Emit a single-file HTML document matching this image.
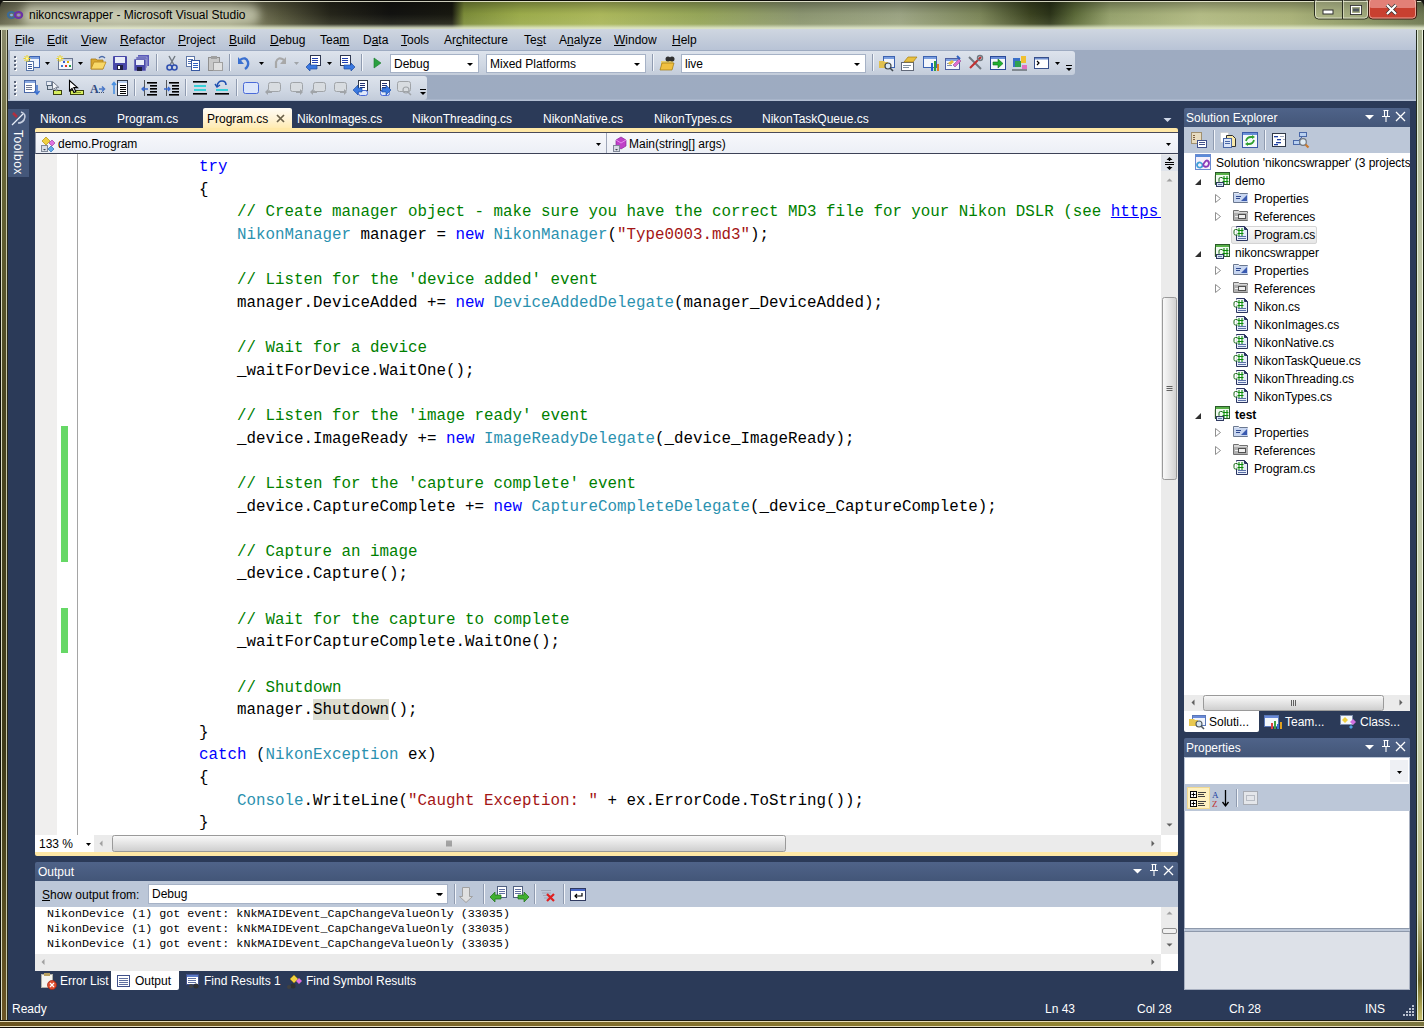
<!DOCTYPE html>
<html><head><meta charset="utf-8">
<style>
*{margin:0;padding:0;box-sizing:border-box}
html,body{width:1424px;height:1028px;overflow:hidden}
body{position:relative;font-family:"Liberation Sans",sans-serif;font-size:12px;color:#000;background:#141410}
.a{position:absolute}
.t{position:absolute;white-space:nowrap;line-height:14px}
/* frame */
#title{left:0;top:0;width:1424px;height:30px;border-radius:7px 7px 0 0;
 background:
  linear-gradient(180deg,#0c0c08 0,#0c0c08 1px,rgba(235,235,215,.85) 1px,rgba(235,235,215,.85) 2px,rgba(0,0,0,.28) 2px,rgba(0,0,0,.1) 9px,rgba(0,0,0,0) 14px,rgba(210,220,170,.12) 24px,rgba(225,232,205,.9) 28px,rgba(225,232,205,.9) 29px),
  linear-gradient(90deg,#5e5e48 0,#8a8a70 30px,#9c9c84 120px,#8a8a6c 230px,#55553c 280px,#25251a 330px,#121210 390px,#181810 452px,#7a8a38 464px,#9aaa4a 520px,#aab65a 600px,#94a458 700px,#8a9470 800px,#9aa282 900px,#7a8458 980px,#3a4220 1030px,#2a3218 1050px,#5a6838 1075px,#94a06c 1110px,#b2ba84 1200px,#a8b078 1290px,#8a9464 1360px,#6a7450 1424px);}
#lframe{left:0;top:30px;width:8px;height:998px;background:linear-gradient(90deg,#101008 0,#101008 1px,#dcdcc4 1px,#dcdcc4 2px,transparent 2px,transparent 6px,#c8c8a8 6px,#c8c8a8 7px,#2a2a1c 7px),linear-gradient(180deg,#8a8a6c 0,#6a6838 120px,#4a4620 370px,#3e3a18 720px,#544c20 870px,#6a5424 990px)}
#rframe{left:1416px;top:30px;width:8px;height:998px;background:linear-gradient(90deg,#222a1c 0,#222a1c 1px,#e0ecd8 1px,#e0ecd8 2px,transparent 2px,transparent 6px,#eef4e2 6px,#eef4e2 7px,#101408 7px),linear-gradient(180deg,#a8b090 0,#c4ccaa 300px,#c4ccaa 700px,#b8b880 880px,#6a6428 950px,#a8a050 975px,#c8c070 990px)}
#bframe{left:0;top:1020px;width:1424px;height:8px;background:linear-gradient(180deg,#181810 0,#181810 1px,#e6dcb8 1px,#e6dcb8 2px,transparent 2px,transparent 6px,#eae0c0 6px,#eae0c0 7px,#100c08 7px),linear-gradient(90deg,#6a5420 0,#7a6428 400px,#8a7a30 900px,#988c34 1200px,#7a7440 1424px)}
/* client */
#client{left:8px;top:29px;width:1408px;height:991px;background:#2b3a58;overflow:hidden;border-top:1px solid #1e2418}
#menubar{background:linear-gradient(180deg,#cfd6e1 0,#c4cddb 10px,#b8c3d6 21px,#9eabc1 21px,#9dabc1 70px,#b2bed2 71px,#b2bed2 72px)}
.menu{top:4px;font-size:12px;color:#000}
.menu u{text-decoration:underline}
.tb{background:linear-gradient(180deg,#dde3ec 0,#cfd7e3 60%,#c3ccda 100%);border-radius:0 3px 3px 0}
.combo{background:#fff;border:1px solid #a6b2c6}
.combo span{position:absolute;left:3px;top:2px;white-space:nowrap;line-height:14px}
.combo i{position:absolute;right:5px;top:8px;width:0;height:0;border-left:3px solid transparent;border-right:3px solid transparent;border-top:3px solid #000}
.tab{color:#fff}
#code{left:85px;top:156.2px;font-family:"Liberation Mono",monospace;font-size:15.833px;line-height:22.62px;color:#000;width:1076px;height:679px;overflow:hidden;white-space:pre}
.kw{color:#0000ff}.cm{color:#008000}.ty{color:#2b91af}.st{color:#a31515}.ln{color:#0000ff;text-decoration:underline}.hl{background:#deded2;padding:2px 0 1px}
#outtxt{left:12px;top:0px;font-family:"Liberation Mono",monospace;font-size:11.7px;line-height:15px;white-space:pre;color:#000}
</style></head><body>
<div id="title" class="a"></div>
<div id="lframe" class="a"></div>
<div id="rframe" class="a"></div>
<div id="bframe" class="a"></div>
<div id="client" class="a"></div>
<div class="a" style="left:22px;top:5px;width:238px;height:20px;border-radius:10px;background:rgba(235,238,215,.55);filter:blur(4px)"></div>
<div class="t" style="left:29px;top:8px;font-size:12px;color:#000">nikoncswrapper - Microsoft Visual Studio</div>
<div id="menubar" class="a" style="left:8px;top:29px;width:1408px;height:72px"></div>
<div class="t" style="left:15px;top:33px"><u>F</u>ile</div>
<div class="t" style="left:47px;top:33px"><u>E</u>dit</div>
<div class="t" style="left:81px;top:33px"><u>V</u>iew</div>
<div class="t" style="left:120px;top:33px"><u>R</u>efactor</div>
<div class="t" style="left:178px;top:33px"><u>P</u>roject</div>
<div class="t" style="left:229px;top:33px"><u>B</u>uild</div>
<div class="t" style="left:270px;top:33px"><u>D</u>ebug</div>
<div class="t" style="left:320px;top:33px">Tea<u>m</u></div>
<div class="t" style="left:363px;top:33px">D<u>a</u>ta</div>
<div class="t" style="left:401px;top:33px"><u>T</u>ools</div>
<div class="t" style="left:444px;top:33px">Ar<u>c</u>hitecture</div>
<div class="t" style="left:524px;top:33px">Te<u>s</u>t</div>
<div class="t" style="left:559px;top:33px">A<u>n</u>alyze</div>
<div class="t" style="left:614px;top:33px"><u>W</u>indow</div>
<div class="t" style="left:672px;top:33px"><u>H</u>elp</div>
<!-- toolbars -->
<div class="a tb" style="left:10px;top:51px;width:1065px;height:24px"></div>
<div class="a tb" style="left:10px;top:76px;width:417px;height:24px"></div>
<!-- combos -->
<div class="a combo" style="left:390px;top:54px;width:89px;height:19px"><span>Debug</span><i></i></div>
<div class="a combo" style="left:486px;top:54px;width:160px;height:19px"><span>Mixed Platforms</span><i></i></div>
<div class="a combo" style="left:681px;top:54px;width:185px;height:19px"><span>live</span><i></i></div>

<!-- toolbox strip -->
<div class="a" style="left:8px;top:109px;width:21px;height:68px;background:#44577a"></div>
<div class="t" style="left:11px;top:120px;color:#fff;transform-origin:0 0;transform:translate(14px,10px) rotate(90deg);font-size:12px;letter-spacing:0.5px">Toolbox</div>

<!-- tabs -->
<div class="t tab" style="left:40px;top:112px">Nikon.cs</div>
<div class="t tab" style="left:117px;top:112px">Program.cs</div>
<div class="a" style="left:203px;top:108px;width:89px;height:22px;border-radius:2px 2px 0 0;background:linear-gradient(180deg,#fffcf4 0,#fff3d6 50%,#ffe9a8 100%)"></div>
<div class="t" style="left:207px;top:112px;color:#000">Program.cs</div>
<div class="t tab" style="left:297px;top:112px">NikonImages.cs</div>
<div class="t tab" style="left:412px;top:112px">NikonThreading.cs</div>
<div class="t tab" style="left:543px;top:112px">NikonNative.cs</div>
<div class="t tab" style="left:654px;top:112px">NikonTypes.cs</div>
<div class="t tab" style="left:762px;top:112px">NikonTaskQueue.cs</div>
<!-- yellow band -->
<div class="a" style="left:35px;top:128px;width:1143px;height:5px;background:#ffe8a6;border-radius:2px 2px 0 0"></div>
<!-- nav bar -->
<div class="a" style="left:35px;top:132px;width:1143px;height:22px;background:linear-gradient(180deg,#f7f8fb,#eceff6);border-top:1px solid #4a4a58;border-bottom:1px solid #3c4256;border-left:1px solid #9098a8"></div>
<div class="a" style="left:606px;top:133px;width:1px;height:20px;background:#9ea6b8"></div>
<div class="t" style="left:58px;top:137px">demo.Program</div>
<div class="t" style="left:629px;top:137px">Main(string[] args)</div>

<!-- editor -->
<div id="editor" class="a" style="left:35px;top:154px;width:1126px;height:681px;background:#fff;overflow:hidden">
 <div class="a" style="left:0;top:0;width:22px;height:681px;background:#f0efee"></div>
 <div class="a" style="left:42px;top:0;width:1px;height:681px;background:#a5a5a5"></div>
</div>
<pre id="code" class="a">            <span class="kw">try</span>
            {
                <span class="cm">// Create manager object - make sure you have the correct MD3 file for your Nikon DSLR (see </span><span class="ln">https:</span>
                <span class="ty">NikonManager</span> manager = <span class="kw">new</span> <span class="ty">NikonManager</span>(<span class="st">"Type0003.md3"</span>);

                <span class="cm">// Listen for the 'device added' event</span>
                manager.DeviceAdded += <span class="kw">new</span> <span class="ty">DeviceAddedDelegate</span>(manager_DeviceAdded);

                <span class="cm">// Wait for a device</span>
                _waitForDevice.WaitOne();

                <span class="cm">// Listen for the 'image ready' event</span>
                _device.ImageReady += <span class="kw">new</span> <span class="ty">ImageReadyDelegate</span>(_device_ImageReady);

                <span class="cm">// Listen for the 'capture complete' event</span>
                _device.CaptureComplete += <span class="kw">new</span> <span class="ty">CaptureCompleteDelegate</span>(_device_CaptureComplete);

                <span class="cm">// Capture an image</span>
                _device.Capture();

                <span class="cm">// Wait for the capture to complete</span>
                _waitForCaptureComplete.WaitOne();

                <span class="cm">// Shutdown</span>
                manager.<span class="hl">Shutdown</span>();
            }
            <span class="kw">catch</span> (<span class="ty">NikonException</span> ex)
            {
                <span class="ty">Console</span>.WriteLine(<span class="st">"Caught Exception: "</span> + ex.ErrorCode.ToString());
            }
</pre>
<div class="a" style="left:61px;top:426px;width:7px;height:136px;background:#66d866"></div>
<div class="a" style="left:61px;top:608px;width:7px;height:45px;background:#66d866"></div>
<!-- editor vscroll -->
<div class="a" style="left:1161px;top:154px;width:17px;height:681px;background:#ebebeb"></div>
<!-- editor hscroll row -->
<div class="a" style="left:35px;top:835px;width:1143px;height:17px;background:#ebebeb"></div>
<div class="a" style="left:35px;top:835px;width:59px;height:17px;background:#fff"></div>
<div class="t" style="left:39px;top:837px">133 %</div>
<div class="a" style="left:1161px;top:835px;width:17px;height:17px;background:#fff"></div>
<div class="a" style="left:35px;top:852px;width:1143px;height:4px;background:#ffe8a6;border-radius:0 0 2px 2px"></div>

<!-- output -->
<div class="a" style="left:35px;top:862px;width:1143px;height:19px;background:linear-gradient(180deg,#4f6389,#435678);border-radius:2px 2px 0 0"></div>
<div class="t" style="left:38px;top:865px;color:#fff">Output</div>
<div class="a" style="left:35px;top:881px;width:1143px;height:26px;background:#bcc7d8"></div>
<div class="t" style="left:42px;top:888px"><u>S</u>how output from:</div>
<div class="a combo" style="left:148px;top:884px;width:300px;height:20px"><span>Debug</span><i></i></div>
<div class="a" style="left:35px;top:907px;width:1143px;height:47px;background:#fff"></div>
<div class="a" style="left:35px;top:954px;width:1143px;height:17px;background:#ebebeb"></div>
<div class="a" style="left:1161px;top:907px;width:17px;height:47px;background:#ebebeb"></div>
<div class="a" style="left:1161px;top:954px;width:17px;height:17px;background:#fff"></div>

<div class="a" style="left:35px;top:907px;width:1126px;height:47px;overflow:hidden"><pre id="outtxt" class="a">NikonDevice (1) got event: kNkMAIDEvent_CapChangeValueOnly (33035)
NikonDevice (1) got event: kNkMAIDEvent_CapChangeValueOnly (33035)
NikonDevice (1) got event: kNkMAIDEvent_CapChangeValueOnly (33035)
NikonDevice (1) got event: kNkMAIDEvent_CapChangeValueOnly (33035)</pre>
</div>
<!-- bottom tabs -->
<div class="a" style="left:111px;top:971px;width:68px;height:19px;background:#fff;border-radius:0 0 2px 2px"></div>
<div class="t" style="left:60px;top:974px;color:#fff">Error List</div>
<div class="t" style="left:135px;top:974px">Output</div>
<div class="t" style="left:204px;top:974px;color:#fff">Find Results 1</div>
<div class="t" style="left:306px;top:974px;color:#fff">Find Symbol Results</div>

<!-- status -->
<div class="t" style="left:12px;top:1002px;color:#fff">Ready</div>
<div class="t" style="left:1045px;top:1002px;color:#fff">Ln 43</div>
<div class="t" style="left:1137px;top:1002px;color:#fff">Col 28</div>
<div class="t" style="left:1229px;top:1002px;color:#fff">Ch 28</div>
<div class="t" style="left:1365px;top:1002px;color:#fff">INS</div>

<!-- solution explorer -->
<div class="a" style="left:1184px;top:108px;width:226px;height:19px;background:linear-gradient(180deg,#4f6389,#435678);border-radius:2px 2px 0 0"></div>
<div class="t" style="left:1186px;top:111px;color:#fff">Solution Explorer</div>
<div class="a" style="left:1184px;top:127px;width:226px;height:26px;background:#bcc7d8"></div>
<div class="a" style="left:1184px;top:153px;width:226px;height:542px;background:#fff"></div>
<div class="a" style="left:1184px;top:695px;width:226px;height:16px;background:#ebebeb"></div>
<div class="a" style="left:1231px;top:226px;width:86px;height:18px;border:1px solid #d4d4d4;border-radius:2px;background:linear-gradient(180deg,#fafafa,#e6e6e6)"></div>
<div id="se" class="a" style="left:1184px;top:153px;width:226px;height:542px;overflow:hidden">
<div class="t" style="left:32px;top:3px;">Solution 'nikoncswrapper' (3 projects)</div>
<div class="t" style="left:51px;top:21px;">demo</div>
<div class="t" style="left:70px;top:39px;">Properties</div>
<div class="t" style="left:70px;top:57px;">References</div>
<div class="t" style="left:70px;top:75px;">Program.cs</div>
<div class="t" style="left:51px;top:93px;">nikoncswrapper</div>
<div class="t" style="left:70px;top:111px;">Properties</div>
<div class="t" style="left:70px;top:129px;">References</div>
<div class="t" style="left:70px;top:147px;">Nikon.cs</div>
<div class="t" style="left:70px;top:165px;">NikonImages.cs</div>
<div class="t" style="left:70px;top:183px;">NikonNative.cs</div>
<div class="t" style="left:70px;top:201px;">NikonTaskQueue.cs</div>
<div class="t" style="left:70px;top:219px;">NikonThreading.cs</div>
<div class="t" style="left:70px;top:237px;">NikonTypes.cs</div>
<div class="t" style="left:51px;top:255px;font-weight:bold;">test</div>
<div class="t" style="left:70px;top:273px;">Properties</div>
<div class="t" style="left:70px;top:291px;">References</div>
<div class="t" style="left:70px;top:309px;">Program.cs</div>
</div>
<!-- SE bottom tabs -->
<div class="a" style="left:1184px;top:711px;width:75px;height:21px;background:#fff;border-radius:0 0 2px 2px"></div>
<div class="t" style="left:1209px;top:715px">Soluti...</div>
<div class="t" style="left:1285px;top:715px;color:#fff">Team...</div>
<div class="t" style="left:1360px;top:715px;color:#fff">Class...</div>

<!-- properties -->
<div class="a" style="left:1184px;top:738px;width:226px;height:19px;background:linear-gradient(180deg,#4f6389,#435678);border-radius:2px 2px 0 0"></div>
<div class="t" style="left:1186px;top:741px;color:#fff">Properties</div>
<div class="a" style="left:1184px;top:757px;width:226px;height:28px;background:#bcc7d8"></div>
<div class="a" style="left:1185px;top:758px;width:224px;height:26px;background:#fff"></div>
<div class="a" style="left:1184px;top:785px;width:226px;height:26px;background:#bcc7d8"></div>
<div class="a" style="left:1184px;top:811px;width:226px;height:117px;background:#fff;border-left:1px solid #a8b0c0;border-right:1px solid #a8b0c0"></div>
<div class="a" style="left:1184px;top:928px;width:226px;height:4px;background:#bcc7d8;border-top:1px solid #8e99ab;border-bottom:1px solid #8e99ab"></div>
<div class="a" style="left:1184px;top:932px;width:226px;height:58px;background:#dde1e8;border:1px solid #a8b0c0;border-top:none"></div>
<!--ICONS-->
<svg class="a" style="left:0;top:0" width="1424" height="1028" viewBox="0 0 1424 1028" shape-rendering="auto">
<rect x="15" y="57" width="2" height="2" fill="#fff"/>
<rect x="14" y="56" width="2" height="2" fill="#5a6478"/>
<rect x="15" y="61" width="2" height="2" fill="#fff"/>
<rect x="14" y="60" width="2" height="2" fill="#5a6478"/>
<rect x="15" y="65" width="2" height="2" fill="#fff"/>
<rect x="14" y="64" width="2" height="2" fill="#5a6478"/>
<rect x="15" y="69" width="2" height="2" fill="#fff"/>
<rect x="14" y="68" width="2" height="2" fill="#5a6478"/>
<rect x="29.5" y="56.5" width="10" height="11" fill="#eef3fb" stroke="#3d63b0"/>
<rect x="30" y="57" width="9" height="2" fill="#7a9ee0"/>
<rect x="26.5" y="61.5" width="7" height="9" fill="#fff" stroke="#5b78a8"/>
<rect x="28" y="64" width="4" height="1" fill="#3c5a98"/>
<rect x="28" y="66" width="4" height="1" fill="#3c5a98"/>
<rect x="28" y="68" width="4" height="1" fill="#3c5a98"/>
<path d="M27 55v7M23.5 58.5h7M24.5 56l5 5M29.5 56l-5 5" stroke="#f0d000" stroke-width=".9"/>
<circle cx="27" cy="58.5" r="1.2" fill="#fff8a0"/>
<path d="M45 62h5l-2.5 3z" fill="#000"/>
<rect x="58.5" y="58.5" width="14" height="11" fill="#f4f7fb" stroke="#6a7690"/>
<rect x="59" y="59" width="13" height="2" fill="#c8d2e4"/>
<rect x="63" y="61" width="2" height="2" fill="#3a5fc8"/>
<rect x="67" y="61" width="2" height="2" fill="#d8b000"/>
<rect x="61" y="65" width="2" height="2" fill="#3a78d0"/>
<rect x="65" y="65" width="2" height="2" fill="#e03020"/>
<rect x="69" y="65" width="2" height="2" fill="#20a040"/>
<path d="M60 55v7M56.5 58.5h7M57.5 56l5 5M62.5 56l-5 5" stroke="#f0d000" stroke-width=".9"/>
<circle cx="60" cy="58.5" r="1.2" fill="#fff8a0"/>
<path d="M78 62h5l-2.5 3z" fill="#000"/>
<path d="M91 59h5l1 1h6v9h-12z" fill="#d9a830" stroke="#a87818" stroke-width=".8"/>
<path d="M91 69l3-7h12l-3 7z" fill="#f8d868" stroke="#b88820" stroke-width=".8"/>
<path d="M99 58q3-3 6 0" fill="none" stroke="#4a6aa8" stroke-width="1.3"/>
<rect x="113" y="56" width="14" height="14" rx="1" fill="#4848a8"/>
<rect x="115" y="57" width="10" height="6" fill="#e8ecf8"/>
<rect x="117" y="65" width="6" height="5" fill="#202040"/>
<rect x="118" y="66" width="2" height="3" fill="#fff"/>
<rect x="138" y="55" width="11" height="11" fill="#5a5ab8"/>
<rect x="136" y="57" width="11" height="11" fill="#5050b0" stroke="#c8cce8" stroke-width=".6"/>
<rect x="134" y="59" width="12" height="12" fill="#4848a8" stroke="#c8cce8" stroke-width=".6"/>
<rect x="136" y="60" width="8" height="5" fill="#e8ecf8"/>
<rect x="137" y="67" width="5" height="4" fill="#202040"/>
<rect x="156" y="54" width="1" height="17" fill="#8f9bb0"/>
<rect x="157" y="54" width="1" height="17" fill="#f2f5fa"/>
<path d="M169 56l5 9M175 56l-5 9" stroke="#707880" stroke-width="1.4"/>
<circle cx="169.5" cy="67.5" r="2.5" fill="none" stroke="#3050b0" stroke-width="1.6"/>
<circle cx="174.5" cy="67.5" r="2.5" fill="none" stroke="#3050b0" stroke-width="1.6"/>
<rect x="186.5" y="56.5" width="8" height="10" fill="#fff" stroke="#6078a8"/>
<rect x="188" y="59" width="5" height="1" fill="#5070b0"/>
<rect x="188" y="61" width="5" height="1" fill="#5070b0"/>
<rect x="188" y="63" width="5" height="1" fill="#5070b0"/>
<rect x="191.5" y="60.5" width="8" height="10" fill="#fff" stroke="#3858a0"/>
<rect x="193" y="63" width="5" height="1" fill="#3060c0"/>
<rect x="193" y="65" width="5" height="1" fill="#3060c0"/>
<rect x="193" y="67" width="5" height="1" fill="#3060c0"/>
<rect x="208.5" y="57.5" width="11" height="13" fill="#c8c8c8" stroke="#909090"/>
<rect x="211" y="56" width="6" height="3" fill="#a0a0a0"/>
<rect x="213.5" y="62.5" width="9" height="8" fill="#e0e0e0" stroke="#a0a0a0"/>
<rect x="229" y="54" width="1" height="17" fill="#8f9bb0"/>
<rect x="230" y="54" width="1" height="17" fill="#f2f5fa"/>
<path d="M240 60q6-4 8 2q1 4-3 7" fill="none" stroke="#3a70d0" stroke-width="2.4"/>
<path d="M238 57v7h6z" fill="#3a70d0"/>
<path d="M259 62h5l-2.5 3z" fill="#000"/>
<path d="M284 60q-6-4-8 2v6" fill="none" stroke="#a8a8a8" stroke-width="2.2"/>
<path d="M286 57v7h-6z" fill="#a8a8a8"/>
<path d="M294 62h5l-2.5 3z" fill="#a0a4a8"/>
<rect x="310.5" y="55.5" width="10" height="10" fill="#fff" stroke="#303850"/>
<rect x="312" y="58" width="6" height="1" fill="#2040b0"/>
<rect x="312" y="60" width="6" height="1" fill="#2040b0"/>
<rect x="312" y="62" width="6" height="1" fill="#2040b0"/>
<path d="M306 67l4-4v2h7v4h-7v2z" fill="#3a78e0" stroke="#1e4aa0" stroke-width=".7"/>
<path d="M327 62h5l-2.5 3z" fill="#000"/>
<rect x="340.5" y="55.5" width="10" height="10" fill="#fff" stroke="#303850"/>
<rect x="342" y="58" width="6" height="1" fill="#2040b0"/>
<rect x="342" y="60" width="6" height="1" fill="#2040b0"/>
<rect x="342" y="62" width="6" height="1" fill="#2040b0"/>
<path d="M355 67l-4-4v2h-7v4h7v2z" fill="#3a78e0" stroke="#1e4aa0" stroke-width=".7"/>
<rect x="361" y="54" width="1" height="17" fill="#8f9bb0"/>
<rect x="362" y="54" width="1" height="17" fill="#f2f5fa"/>
<path d="M374 58l7 5-7 5z" fill="#2aa040" stroke="#1a7a2a" stroke-width=".6"/>
<rect x="652" y="54" width="1" height="17" fill="#8f9bb0"/>
<rect x="653" y="54" width="1" height="17" fill="#f2f5fa"/>
<path d="M661 61h6l2-2h4v10h-12z" fill="#e8d070"/>
<path d="M660 70l2-7h12l-2 7z" fill="#f0c040" stroke="#a07810" stroke-width=".7"/>
<circle cx="668" cy="59" r="2.5" fill="#303030"/><circle cx="672" cy="59" r="2.5" fill="#303030"/>
<rect x="872" y="54" width="1" height="17" fill="#8f9bb0"/>
<rect x="873" y="54" width="1" height="17" fill="#f2f5fa"/>
<rect x="883.5" y="56.5" width="11" height="11" fill="#f0f4fb" stroke="#3d63b0"/>
<rect x="884" y="57" width="10" height="2" fill="#7a9ee0"/>
<path d="M879 61h5l1 1h3v6h-9z" fill="#e0c050"/>
<circle cx="888" cy="66" r="3" fill="#d8e8f8" stroke="#404850" stroke-width="1.2"/>
<path d="M890 68l3 3" stroke="#404850" stroke-width="1.6"/>
<rect x="901.5" y="62.5" width="12" height="8" fill="#fff" stroke="#606878"/>
<rect x="903" y="65" width="8" height="1" fill="#8090a0"/><rect x="903" y="67" width="6" height="1" fill="#8090a0"/>
<path d="M904 62l4-5h9l-4 5z" fill="#e8c040" stroke="#a88010" stroke-width=".7"/>
<rect x="923.5" y="56.5" width="13" height="11" fill="#f4f7fb" stroke="#3d63b0"/>
<rect x="924" y="57" width="12" height="2" fill="#7a9ee0"/>
<rect x="931" y="63" width="2" height="8" fill="#2060d0"/><rect x="934" y="61" width="2" height="10" fill="#30a040"/><rect x="937" y="64" width="2" height="7" fill="#e08020"/>
<rect x="945.5" y="58.5" width="14" height="11" fill="#f4f7fb" stroke="#5060a0"/>
<rect x="946" y="59" width="13" height="2" fill="#7a9ee0"/>
<rect x="947" y="63" width="5" height="1" fill="#8090b0"/><rect x="947" y="65" width="5" height="1" fill="#8090b0"/>
<path d="M948 63l4-3 2 2-4 3z" fill="#e8c040"/>
<path d="M953 65l6-6 2 2-6 6z" fill="#e070d0" stroke="#905090" stroke-width=".6"/>
<path d="M957 56l3 3" stroke="#3060c0" stroke-width="2"/>
<path d="M969 57l12 12" stroke="#707880" stroke-width="2"/>
<path d="M981 57l-11 11" stroke="#c03030" stroke-width="2.2"/>
<circle cx="980" cy="58" r="2.5" fill="none" stroke="#707880" stroke-width="1.4"/>
<rect x="990.5" y="56.5" width="15" height="13" fill="#f4f7fb" stroke="#2a4a98"/>
<rect x="991" y="57" width="14" height="2" fill="#6a8ed8"/>
<path d="M993 62h5v-3l5 4.5-5 4.5v-3h-5z" fill="#20b030" stroke="#107020" stroke-width=".6"/>
<rect x="1013" y="58" width="7" height="9" fill="#3a70c8"/><rect x="1015" y="61" width="6" height="6" fill="#30a050"/>
<rect x="1021" y="56" width="5" height="7" fill="#f0c030"/><rect x="1022" y="65" width="5" height="5" fill="#e070c0"/>
<rect x="1012" y="69" width="15" height="2" fill="#808890"/>
<rect x="1034.5" y="57.5" width="14" height="11" fill="#fff" stroke="#38508a"/>
<rect x="1035" y="58" width="13" height="1.5" fill="#7090d0"/>
<path d="M1037 61l2 2-2 2" fill="none" stroke="#000" stroke-width="1.2"/>
<path d="M1055 62h5l-2.5 3z" fill="#000"/>
<rect x="1066" y="65" width="6" height="1" fill="#000"/>
<path d="M1066 68h6l-3 3z" fill="#000"/>
<rect x="15" y="82" width="2" height="2" fill="#fff"/>
<rect x="14" y="81" width="2" height="2" fill="#5a6478"/>
<rect x="15" y="86" width="2" height="2" fill="#fff"/>
<rect x="14" y="85" width="2" height="2" fill="#5a6478"/>
<rect x="15" y="90" width="2" height="2" fill="#fff"/>
<rect x="14" y="89" width="2" height="2" fill="#5a6478"/>
<rect x="15" y="94" width="2" height="2" fill="#fff"/>
<rect x="14" y="93" width="2" height="2" fill="#5a6478"/>
<rect x="24.5" y="80.5" width="11" height="12" fill="#fff" stroke="#4a68a8"/>
<rect x="25" y="81" width="10" height="2" fill="#88a8e0"/>
<rect x="26" y="85" width="6" height="1" fill="#707890"/>
<rect x="26" y="87" width="6" height="1" fill="#707890"/>
<rect x="26" y="89" width="6" height="1" fill="#707890"/>
<path d="M37 85v8M34.5 91l2.5 3 2.5-3" fill="none" stroke="#3a70d0" stroke-width="1.5"/>
<rect x="46.5" y="81.5" width="5" height="4" fill="#e8ecf4" stroke="#8090a8"/>
<rect x="47.5" y="85.5" width="5" height="4" fill="#d0d8e4" stroke="#506070"/>
<rect x="53.5" y="90.5" width="8" height="4" fill="#d8f060" stroke="#3a4010"/>
<path d="M52.5 81.5v8.5l2-2 1.5 3 1.3-.7-1.5-3h3z" fill="#f4f6fa" stroke="#707888" stroke-width="1"/>
<rect x="70.5" y="90.5" width="13" height="4" fill="#d8f060" stroke="#3a4010"/>
<rect x="73" y="92" width="8" height="1" fill="#8a9a30"/>
<path d="M69.5 80.5v10.5l2.5-2.5 2 4 1.8-.9-2-4h3.7z" fill="#fff" stroke="#000" stroke-width="1.1"/>
<text x="90" y="93" font-family="Liberation Serif" font-weight="bold" font-size="12" fill="#304a80">A</text>
<path d="M99 89h5M102 86.5l2.5 2.5-2.5 2.5" fill="none" stroke="#4a78c8" stroke-width="1.5"/>
<rect x="99" y="92" width="1" height="1" fill="#405070"/><rect x="101" y="92" width="1" height="1" fill="#405070"/><rect x="103" y="92" width="1" height="1" fill="#405070"/>
<rect x="117.5" y="80.5" width="10" height="15" fill="#fff" stroke="#303848"/>
<rect x="118" y="81" width="9" height="2" fill="#b8d0f0"/>
<rect x="120" y="85" width="6" height="1" fill="#000"/>
<rect x="120" y="87" width="6" height="1" fill="#000"/>
<rect x="120" y="89" width="6" height="1" fill="#000"/>
<rect x="120" y="91" width="6" height="1" fill="#000"/>
<rect x="120" y="93" width="6" height="1" fill="#000"/>
<path d="M114 94v-11M112 85l2-2.5 2 2.5" fill="none" stroke="#4a90e0" stroke-width="1.6"/>
<rect x="134" y="79" width="1" height="17" fill="#8f9bb0"/>
<rect x="135" y="79" width="1" height="17" fill="#f2f5fa"/>
<rect x="147" y="82" width="10" height="1.6" fill="#000"/>
<rect x="150" y="85" width="7" height="1.6" fill="#000"/>
<rect x="150" y="88" width="7" height="1.6" fill="#000"/>
<rect x="150" y="91" width="7" height="1.6" fill="#000"/>
<rect x="147" y="94" width="10" height="1.6" fill="#000"/>
<rect x="144" y="80" width="1" height="16" fill="#000" opacity=".6"/>
<path d="M148 89h-6M144 87l-2 2 2 2" fill="none" stroke="#3a6ad0" stroke-width="1.3"/>
<rect x="169" y="82" width="10" height="1.6" fill="#000"/>
<rect x="172" y="85" width="7" height="1.6" fill="#000"/>
<rect x="172" y="88" width="7" height="1.6" fill="#000"/>
<rect x="172" y="91" width="7" height="1.6" fill="#000"/>
<rect x="169" y="94" width="10" height="1.6" fill="#000"/>
<rect x="166" y="80" width="1" height="16" fill="#000" opacity=".6"/>
<path d="M164 89h6M168 87l2 2-2 2" fill="none" stroke="#3a6ad0" stroke-width="1.3"/>
<rect x="185" y="79" width="1" height="17" fill="#8f9bb0"/>
<rect x="186" y="79" width="1" height="17" fill="#f2f5fa"/>
<rect x="193" y="81" width="14" height="1.6" fill="#000"/>
<rect x="194" y="85" width="12" height="2" fill="#38d0d8"/>
<rect x="194" y="89" width="12" height="2" fill="#38d0d8"/>
<rect x="193" y="93" width="14" height="1.6" fill="#000"/>
<path d="M217 86q1-5 5-5q4 0 4 4" fill="none" stroke="#2050b0" stroke-width="1.6"/>
<path d="M215 84l2 3 3-2" fill="none" stroke="#2050b0" stroke-width="1.4"/>
<rect x="216" y="89" width="12" height="2" fill="#38d0d8"/>
<rect x="215" y="93" width="14" height="1.6" fill="#000"/>
<rect x="236" y="79" width="1" height="17" fill="#8f9bb0"/>
<rect x="237" y="79" width="1" height="17" fill="#f2f5fa"/>
<rect x="243.5" y="82.5" width="15" height="11" rx="2" fill="#dce6fa" stroke="#4a6ad8"/>
<rect x="268.5" y="82.5" width="12" height="9" rx="2" fill="#d8dce0" stroke="#a0a4a8"/>
<path d="M265 92l3-3v2h4v2h-4v2z" fill="#a0a4a8"/>
<rect x="290.5" y="82.5" width="12" height="9" rx="2" fill="#d8dce0" stroke="#a0a4a8"/>
<path d="M303 92l-3-3v2h-4v2h4v2z" fill="#a0a4a8"/>
<rect x="313.5" y="82.5" width="12" height="9" rx="2" fill="#d8dce0" stroke="#a0a4a8"/>
<path d="M310 92l3-3v2h4v2h-4v2z" fill="#a0a4a8"/>
<rect x="334.5" y="82.5" width="12" height="9" rx="2" fill="#d8dce0" stroke="#a0a4a8"/>
<path d="M347 92l-3-3v2h-4v2h4v2z" fill="#a0a4a8"/>
<rect x="358.5" y="80.5" width="9" height="10" fill="#fff" stroke="#303848"/>
<rect x="360" y="83" width="5" height="1" fill="#203070"/>
<rect x="360" y="85" width="5" height="1" fill="#203070"/>
<rect x="360" y="87" width="5" height="1" fill="#203070"/>
<rect x="358.5" y="90.5" width="9" height="5" rx="2" fill="#e0e8fa" stroke="#4a6ad8"/>
<path d="M353 90l5-5v3h4v4h-4v3z" fill="#3a78e0" stroke="#1a4aa0" stroke-width=".6"/>
<rect x="380.5" y="80.5" width="9" height="10" fill="#fff" stroke="#303848"/>
<rect x="382" y="83" width="5" height="1" fill="#203070"/>
<rect x="382" y="85" width="5" height="1" fill="#203070"/>
<rect x="382" y="87" width="5" height="1" fill="#203070"/>
<rect x="380.5" y="90.5" width="9" height="5" rx="2" fill="#e0e8fa" stroke="#4a6ad8"/>
<path d="M391 90l-5-5v3h-4v4h4v3z" fill="#3a78e0" stroke="#1a4aa0" stroke-width=".6"/>
<rect x="397.5" y="81.5" width="13" height="10" rx="2" fill="#d8dce0" stroke="#a0a4a8"/>
<circle cx="406" cy="90" r="3" fill="none" stroke="#a0a4a8" stroke-width="1.2"/>
<path d="M408 92l3 3" stroke="#a0a4a8" stroke-width="1.5"/>
<rect x="420" y="89" width="6" height="1" fill="#000"/>
<path d="M420 92h6l-3 3z" fill="#000"/>
<ellipse cx="11.5" cy="15" rx="3.6" ry="3" fill="none" stroke="#3a6a98" stroke-width="2.2"/>
<ellipse cx="18.5" cy="15" rx="3.6" ry="3" fill="none" stroke="#6a30a8" stroke-width="2.2"/>
<ellipse cx="18.5" cy="15" rx="1.5" ry="1.2" fill="#a080e0"/>
<ellipse cx="11.5" cy="15" rx="1.5" ry="1.2" fill="#80b0e0"/>
<rect x="1314.5" y="-2" width="54" height="21" rx="4" fill="rgba(200,205,170,.35)" stroke="#2a2e20"/>
<rect x="1315.5" y="-1" width="52" height="19" rx="3" fill="none" stroke="rgba(255,255,240,.6)"/>
<rect x="1342" y="0" width="1" height="19" fill="#2a2e20"/><rect x="1343" y="0" width="1" height="18" fill="rgba(255,255,240,.5)"/>
<rect x="1368.5" y="-2" width="48" height="21" rx="4" fill="#c84030" stroke="#3a1a10"/>
<rect x="1369.5" y="-1" width="46" height="9" rx="2" fill="#e8908a" opacity=".8"/>
<rect x="1369.5" y="-1" width="46" height="19" rx="3" fill="none" stroke="rgba(255,230,220,.6)"/>
<rect x="1323" y="10" width="10" height="4" fill="#fff" stroke="#303030" stroke-width="1"/>
<rect x="1350.5" y="5.5" width="11" height="9" fill="none" stroke="#303030" stroke-width="1"/><rect x="1351.5" y="6.5" width="9" height="7" fill="none" stroke="#fff" stroke-width="1.2"/><rect x="1353" y="8.5" width="6" height="3" fill="#505860"/>
<path d="M1387 5l9 9M1396 5l-9 9" stroke="#303030" stroke-width="3.6"/><path d="M1387 5l9 9M1396 5l-9 9" stroke="#fff" stroke-width="2.2"/>
<path d="M13 113l4 4" stroke="#b03040" stroke-width="2.5"/>
<path d="M12 125l11-11" stroke="#e8eef8" stroke-width="1.2"/>
<path d="M21 112q6 2 3 8q-2 3-6 3" fill="none" stroke="#c8d0e0" stroke-width="1.6"/>
<path d="M277 115l7 7M284 115l-7 7" stroke="#6a6048" stroke-width="1.7"/>
<path d="M1163.5 118h8l-4 4z" fill="#d0d8e8"/>
<path d="M46 137l4 4-4 4-4-4z" fill="#f0d040" stroke="#b09010" stroke-width=".7"/>
<path d="M52 140l3 3-3 3-3-3z" fill="#e070e0" stroke="#a040a0" stroke-width=".7"/>
<path d="M51 146l3 3-3 3-3-3z" fill="#60a8e8" stroke="#3070b0" stroke-width=".7"/>
<rect x="41.5" y="145.5" width="6" height="6" fill="#d8dce4" stroke="#808898"/>
<path d="M43 149h3l-1.5 1.5z" fill="#404850"/>
<path d="M621 137l5 3v6l-5 3-5-3v-6z" fill="#c040c8" stroke="#8a2a98" stroke-width=".7"/>
<path d="M616 140l5 3 5-3" fill="none" stroke="#f0a0f8" stroke-width=".8"/>
<rect x="613.5" y="145.5" width="6" height="6" fill="#d8dce4" stroke="#808898"/>
<path d="M615 149h3l-1.5 1.5z" fill="#404850"/>
<path d="M596 143h5l-2.5 3z" fill="#000"/>
<path d="M1166 143h5l-2.5 3z" fill="#000"/>
<rect x="1161" y="155" width="17" height="16" fill="#dfe3ea"/>
<path d="M1165 162.5h9M1165 164.5h9" stroke="#000" stroke-width="1.2"/>
<path d="M1166.5 160l3-3 3 3z M1166.5 167l3 3 3-3z" fill="#000"/>
<path d="M1169.5 159v2M1169.5 166v2" stroke="#000" stroke-width="1.4"/>
<path d="M1166.5 181.5h6l-3 -3z" fill="#a0a0a0"/>
<defs><linearGradient id="vg1162_297" x1="0" x2="1"><stop offset="0" stop-color="#fafafa"/><stop offset=".5" stop-color="#e6e6e6"/><stop offset="1" stop-color="#cfcfcf"/></linearGradient></defs>
<rect x="1162.5" y="297.5" width="14" height="182" rx="2" fill="url(#vg1162_297)" stroke="#9a9a9a"/>
<rect x="1166.5" y="386.0" width="6" height="1" fill="#606060"/>
<rect x="1166.5" y="388.0" width="6" height="1" fill="#606060"/>
<rect x="1166.5" y="390.0" width="6" height="1" fill="#606060"/>
<path d="M1166.5 823.5h6l-3 3z" fill="#606060"/>
<path d="M86 843h5l-2.5 3z" fill="#000"/>
<path d="M102.5 840.5v6l-3 -3z" fill="#a0a0a0"/>
<defs><linearGradient id="hg112_835" x1="0" y1="0" x2="0" y2="1"><stop offset="0" stop-color="#fafafa"/><stop offset=".5" stop-color="#e4e4e4"/><stop offset="1" stop-color="#cdcdcd"/></linearGradient></defs>
<rect x="112.5" y="835.5" width="673" height="16" rx="2" fill="url(#hg112_835)" stroke="#9a9a9a"/>
<rect x="446.5" y="840.5" width="1" height="6" fill="#606060"/>
<rect x="448.5" y="840.5" width="1" height="6" fill="#606060"/>
<rect x="450.5" y="840.5" width="1" height="6" fill="#606060"/>
<path d="M1151.5 840.5v6l3 -3z" fill="#606060"/>
<path d="M1133 869h9l-4.5 4.5z" fill="#fff"/>
<path d="M1151.5 864.5h5M1152.5 864.5v6M1155.5 864.5v6M1150 870.5h8M1154 871v5" fill="none" stroke="#fff" stroke-width="1.1"/>
<path d="M1164 866l9 9M1173 866l-9 9" stroke="#fff" stroke-width="1.3"/>
<rect x="454" y="884" width="1" height="20" fill="#8f9bb0"/>
<rect x="455" y="884" width="1" height="20" fill="#f2f5fa"/>
<path d="M462.5 887.5h7v9h3l-6.5 6-6.5-6h3z" fill="#e0e0e0" stroke="#a0a0a0"/>
<rect x="483" y="884" width="1" height="20" fill="#8f9bb0"/>
<rect x="484" y="884" width="1" height="20" fill="#f2f5fa"/>
<rect x="497.5" y="886.5" width="9" height="11" fill="#fff" stroke="#506080"/>
<rect x="499" y="889" width="6" height="1" fill="#6070a0"/><rect x="499" y="891" width="6" height="1" fill="#6070a0"/><rect x="499" y="893" width="6" height="1" fill="#6070a0"/>
<path d="M490 897l5-5v3h6v4h-6v3z" fill="#40b030" stroke="#207018" stroke-width=".7"/>
<rect x="513.5" y="886.5" width="9" height="11" fill="#fff" stroke="#506080"/>
<rect x="515" y="889" width="6" height="1" fill="#6070a0"/><rect x="515" y="891" width="6" height="1" fill="#6070a0"/><rect x="515" y="893" width="6" height="1" fill="#6070a0"/>
<path d="M529 897l-5-5v3h-6v4h6v3z" fill="#40b030" stroke="#207018" stroke-width=".7"/>
<rect x="534" y="884" width="1" height="20" fill="#8f9bb0"/>
<rect x="535" y="884" width="1" height="20" fill="#f2f5fa"/>
<rect x="541" y="890.0" width="10" height="1" fill="#a0a8b8"/>
<rect x="542" y="892.5" width="9" height="1" fill="#a0a8b8"/>
<rect x="543" y="895.0" width="8" height="1" fill="#a0a8b8"/>
<rect x="544" y="897.5" width="7" height="1" fill="#a0a8b8"/>
<path d="M547 894l7 7M554 894l-7 7" stroke="#e02020" stroke-width="2.2"/>
<rect x="563" y="884" width="1" height="20" fill="#8f9bb0"/>
<rect x="564" y="884" width="1" height="20" fill="#f2f5fa"/>
<rect x="570.5" y="888.5" width="15" height="12" fill="#fff" stroke="#303a60"/>
<rect x="571" y="889" width="14" height="2" fill="#4a68c8"/>
<path d="M582 893v3h-7M577 894l-2 2 2 2" fill="none" stroke="#000" stroke-width="1.2"/>
<path d="M438 893h5l-2.5 3z" fill="#000"/>
<path d="M1166.5 914.5h6l-3 -3z" fill="#a0a0a0"/>
<rect x="1162.5" y="928.5" width="14" height="5" rx="1.5" fill="#f0f0f0" stroke="#909090"/>
<path d="M1166.5 943.5h6l-3 3z" fill="#606060"/>
<path d="M1151.5 959v6l3 -3z" fill="#606060"/>
<path d="M44.5 959v6l-3 -3z" fill="#a0a0a0"/>
<path d="M1365 115h9l-4.5 4.5z" fill="#fff"/>
<path d="M1383.5 110.5h5M1384.5 110.5v6M1387.5 110.5v6M1382 116.5h8M1386 117v5" fill="none" stroke="#fff" stroke-width="1.1"/>
<path d="M1396 112l9 9M1405 112l-9 9" stroke="#fff" stroke-width="1.3"/>
<rect x="1191.5" y="132.5" width="10" height="11" fill="#e8dcc0" stroke="#a09070"/>
<rect x="1193" y="135" width="2" height="1" fill="#806040"/>
<rect x="1193" y="137" width="2" height="1" fill="#806040"/>
<rect x="1193" y="139" width="2" height="1" fill="#806040"/>
<rect x="1197.5" y="140.5" width="9" height="7" fill="#fff" stroke="#40508a"/>
<rect x="1199" y="142" width="6" height="1" fill="#40508a"/><rect x="1199" y="144" width="6" height="1" fill="#40508a"/>
<rect x="1213" y="130" width="1" height="20" fill="#8f9bb0"/>
<rect x="1214" y="130" width="1" height="20" fill="#f2f5fa"/>
<rect x="1220.5" y="132.5" width="8" height="10" fill="#fff" stroke="#c0c0c0" stroke-dasharray="1 1"/>
<path d="M1226.5 135.5h6l3 3v8h-9z" fill="#f8e8a8" stroke="#303030"/>
<rect x="1223.5" y="138.5" width="8" height="9" fill="#dce6f8" stroke="#4a68a8"/>
<rect x="1225" y="141" width="5" height="1" fill="#4a68a8"/><rect x="1225" y="143" width="5" height="1" fill="#4a68a8"/>
<rect x="1242.5" y="132.5" width="15" height="15" fill="#f4f8fb" stroke="#3a5aa8"/>
<rect x="1243" y="133" width="14" height="2" fill="#6a90d8"/>
<path d="M1246 141q1-4 5-4l2 0M1254 140q-1 4-5 4h-2" fill="none" stroke="#30a030" stroke-width="1.8"/>
<path d="M1252 135l3 2-3 2z M1248 142l-3 2 3 2z" fill="#30a030"/>
<rect x="1264" y="130" width="1" height="20" fill="#8f9bb0"/>
<rect x="1265" y="130" width="1" height="20" fill="#f2f5fa"/>
<rect x="1272.5" y="133.5" width="13" height="13" fill="#fff" stroke="#303848"/>
<rect x="1274" y="136" width="4" height="1.3" fill="#2040a0"/><rect x="1277" y="139" width="4" height="1.3" fill="#2040a0"/><rect x="1276" y="142" width="5" height="1.3" fill="#2040a0"/><rect x="1274" y="144" width="4" height="1.3" fill="#2040a0"/>
<rect x="1280" y="136" width="4" height="1" fill="#a0a8c0"/><rect x="1283" y="139" width="2" height="1" fill="#a0a8c0"/>
<rect x="1299.5" y="132.5" width="7" height="4" fill="#b8d0f0" stroke="#4a68a8"/>
<rect x="1293.5" y="140.5" width="6" height="4" fill="#b8d0f0" stroke="#4a68a8"/>
<path d="M1302 137l-4 4" stroke="#4a68a8"/>
<circle cx="1303" cy="142" r="3.3" fill="#e0ecf4" stroke="#707880" stroke-width="1.2"/>
<path d="M1305.5 144.5l3 3" stroke="#c87a30" stroke-width="2.2"/>
<rect x="1195.5" y="154.5" width="15" height="15" fill="#f4f0fb" stroke="#6a8ad0"/>
<rect x="1196" y="155" width="14" height="2" fill="#5a8ad8"/>
<path d="M1203 165q-3-4-5-2q-2 2 0 4q3 2 5-2" fill="none" stroke="#40a0d8" stroke-width="1.8"/>
<path d="M1203 165q3-6 5-4q2 2 0 5q-3 2-5-1" fill="none" stroke="#8a3ab8" stroke-width="1.8"/>
<path d="M1195 185h6v-6z" fill="#303030"/>
<rect x="1214.5" y="175.5" width="4" height="9" fill="#c8ccb8"/>
<rect x="1215.5" y="172.5" width="14" height="12" fill="#f0faf0" stroke="#2a5a2a"/>
<rect x="1216" y="173" width="13" height="2" fill="#58b048"/>
<path d="M1222.5 177.5h-2q-1.5 0-1.5 1.5v2.5q0 1.5 1.5 1.5h2" fill="none" stroke="#1a6a1a" stroke-width="1"/>
<path d="M1224.0 176v8M1227.0 176v8M1222.5 178.5h6M1222.5 181.5h6" stroke="#0a8a0a" stroke-width="1.1"/>
<rect x="1216.5" y="182.5" width="7" height="4" fill="#d8e4f4" stroke="#303a60"/>
<rect x="1218" y="184" width="4" height="1" fill="#6078a8"/>
<path d="M1215.5 194.5l5 4-5 4z" fill="none" stroke="#909090" stroke-width="1"/>
<path d="M1233.5 192.5h5l1 1h8v9h-14z" fill="#dfe6f4" stroke="#6a7890"/>
<rect x="1234" y="194" width="14" height="8" fill="#c8d6f0"/>
<rect x="1236" y="196" width="5" height="1" fill="#304a90"/><rect x="1236" y="198" width="4" height="1" fill="#304a90"/>
<path d="M1241 201l6-6v6z" fill="#3a5ab0"/>
<path d="M1215.5 212.5l5 4-5 4z" fill="none" stroke="#909090" stroke-width="1"/>
<path d="M1233.5 210.5h5l1 1h8v9h-14z" fill="#d8d8d8" stroke="#707070"/>
<rect x="1234" y="213" width="14" height="7" fill="#b0b0b0"/>
<rect x="1238.5" y="214.5" width="7" height="4" fill="#f0f0f0" stroke="#505050"/>
<path d="M1235 216.5h3" stroke="#f0f0f0" stroke-width="1"/>
<path d="M1236.5 226.5h8l3 3v11h-11z" fill="#e8eefa" stroke="#2a3460"/>
<path d="M1244.5 226.5v3h3" fill="#2a3460" stroke="#2a3460"/>
<rect x="1238" y="236" width="8" height="1" fill="#5a70a8"/><rect x="1238" y="238" width="8" height="1" fill="#5a70a8"/>
<rect x="1233" y="227.5" width="10" height="7.5" fill="#fff" opacity=".85"/>
<path d="M1237.5 229.5h-2q-1.5 0-1.5 1.5v2.5q0 1.5 1.5 1.5h2" fill="none" stroke="#1a6a1a" stroke-width="1"/>
<path d="M1239.0 228v8M1242.0 228v8M1237.5 230.5h6M1237.5 233.5h6" stroke="#0a8a0a" stroke-width="1.1"/>
<path d="M1195 257h6v-6z" fill="#303030"/>
<rect x="1214.5" y="247.5" width="4" height="9" fill="#c8ccb8"/>
<rect x="1215.5" y="244.5" width="14" height="12" fill="#f0faf0" stroke="#2a5a2a"/>
<rect x="1216" y="245" width="13" height="2" fill="#58b048"/>
<path d="M1222.5 249.5h-2q-1.5 0-1.5 1.5v2.5q0 1.5 1.5 1.5h2" fill="none" stroke="#1a6a1a" stroke-width="1"/>
<path d="M1224.0 248v8M1227.0 248v8M1222.5 250.5h6M1222.5 253.5h6" stroke="#0a8a0a" stroke-width="1.1"/>
<rect x="1216.5" y="254.5" width="7" height="4" fill="#d8e4f4" stroke="#303a60"/>
<rect x="1218" y="256" width="4" height="1" fill="#6078a8"/>
<path d="M1215.5 266.5l5 4-5 4z" fill="none" stroke="#909090" stroke-width="1"/>
<path d="M1233.5 264.5h5l1 1h8v9h-14z" fill="#dfe6f4" stroke="#6a7890"/>
<rect x="1234" y="266" width="14" height="8" fill="#c8d6f0"/>
<rect x="1236" y="268" width="5" height="1" fill="#304a90"/><rect x="1236" y="270" width="4" height="1" fill="#304a90"/>
<path d="M1241 273l6-6v6z" fill="#3a5ab0"/>
<path d="M1215.5 284.5l5 4-5 4z" fill="none" stroke="#909090" stroke-width="1"/>
<path d="M1233.5 282.5h5l1 1h8v9h-14z" fill="#d8d8d8" stroke="#707070"/>
<rect x="1234" y="285" width="14" height="7" fill="#b0b0b0"/>
<rect x="1238.5" y="286.5" width="7" height="4" fill="#f0f0f0" stroke="#505050"/>
<path d="M1235 288.5h3" stroke="#f0f0f0" stroke-width="1"/>
<path d="M1236.5 298.5h8l3 3v11h-11z" fill="#e8eefa" stroke="#2a3460"/>
<path d="M1244.5 298.5v3h3" fill="#2a3460" stroke="#2a3460"/>
<rect x="1238" y="308" width="8" height="1" fill="#5a70a8"/><rect x="1238" y="310" width="8" height="1" fill="#5a70a8"/>
<rect x="1233" y="299.5" width="10" height="7.5" fill="#fff" opacity=".85"/>
<path d="M1237.5 301.5h-2q-1.5 0-1.5 1.5v2.5q0 1.5 1.5 1.5h2" fill="none" stroke="#1a6a1a" stroke-width="1"/>
<path d="M1239.0 300v8M1242.0 300v8M1237.5 302.5h6M1237.5 305.5h6" stroke="#0a8a0a" stroke-width="1.1"/>
<path d="M1236.5 316.5h8l3 3v11h-11z" fill="#e8eefa" stroke="#2a3460"/>
<path d="M1244.5 316.5v3h3" fill="#2a3460" stroke="#2a3460"/>
<rect x="1238" y="326" width="8" height="1" fill="#5a70a8"/><rect x="1238" y="328" width="8" height="1" fill="#5a70a8"/>
<rect x="1233" y="317.5" width="10" height="7.5" fill="#fff" opacity=".85"/>
<path d="M1237.5 319.5h-2q-1.5 0-1.5 1.5v2.5q0 1.5 1.5 1.5h2" fill="none" stroke="#1a6a1a" stroke-width="1"/>
<path d="M1239.0 318v8M1242.0 318v8M1237.5 320.5h6M1237.5 323.5h6" stroke="#0a8a0a" stroke-width="1.1"/>
<path d="M1236.5 334.5h8l3 3v11h-11z" fill="#e8eefa" stroke="#2a3460"/>
<path d="M1244.5 334.5v3h3" fill="#2a3460" stroke="#2a3460"/>
<rect x="1238" y="344" width="8" height="1" fill="#5a70a8"/><rect x="1238" y="346" width="8" height="1" fill="#5a70a8"/>
<rect x="1233" y="335.5" width="10" height="7.5" fill="#fff" opacity=".85"/>
<path d="M1237.5 337.5h-2q-1.5 0-1.5 1.5v2.5q0 1.5 1.5 1.5h2" fill="none" stroke="#1a6a1a" stroke-width="1"/>
<path d="M1239.0 336v8M1242.0 336v8M1237.5 338.5h6M1237.5 341.5h6" stroke="#0a8a0a" stroke-width="1.1"/>
<path d="M1236.5 352.5h8l3 3v11h-11z" fill="#e8eefa" stroke="#2a3460"/>
<path d="M1244.5 352.5v3h3" fill="#2a3460" stroke="#2a3460"/>
<rect x="1238" y="362" width="8" height="1" fill="#5a70a8"/><rect x="1238" y="364" width="8" height="1" fill="#5a70a8"/>
<rect x="1233" y="353.5" width="10" height="7.5" fill="#fff" opacity=".85"/>
<path d="M1237.5 355.5h-2q-1.5 0-1.5 1.5v2.5q0 1.5 1.5 1.5h2" fill="none" stroke="#1a6a1a" stroke-width="1"/>
<path d="M1239.0 354v8M1242.0 354v8M1237.5 356.5h6M1237.5 359.5h6" stroke="#0a8a0a" stroke-width="1.1"/>
<path d="M1236.5 370.5h8l3 3v11h-11z" fill="#e8eefa" stroke="#2a3460"/>
<path d="M1244.5 370.5v3h3" fill="#2a3460" stroke="#2a3460"/>
<rect x="1238" y="380" width="8" height="1" fill="#5a70a8"/><rect x="1238" y="382" width="8" height="1" fill="#5a70a8"/>
<rect x="1233" y="371.5" width="10" height="7.5" fill="#fff" opacity=".85"/>
<path d="M1237.5 373.5h-2q-1.5 0-1.5 1.5v2.5q0 1.5 1.5 1.5h2" fill="none" stroke="#1a6a1a" stroke-width="1"/>
<path d="M1239.0 372v8M1242.0 372v8M1237.5 374.5h6M1237.5 377.5h6" stroke="#0a8a0a" stroke-width="1.1"/>
<path d="M1236.5 388.5h8l3 3v11h-11z" fill="#e8eefa" stroke="#2a3460"/>
<path d="M1244.5 388.5v3h3" fill="#2a3460" stroke="#2a3460"/>
<rect x="1238" y="398" width="8" height="1" fill="#5a70a8"/><rect x="1238" y="400" width="8" height="1" fill="#5a70a8"/>
<rect x="1233" y="389.5" width="10" height="7.5" fill="#fff" opacity=".85"/>
<path d="M1237.5 391.5h-2q-1.5 0-1.5 1.5v2.5q0 1.5 1.5 1.5h2" fill="none" stroke="#1a6a1a" stroke-width="1"/>
<path d="M1239.0 390v8M1242.0 390v8M1237.5 392.5h6M1237.5 395.5h6" stroke="#0a8a0a" stroke-width="1.1"/>
<path d="M1195 419h6v-6z" fill="#303030"/>
<rect x="1214.5" y="409.5" width="4" height="9" fill="#c8ccb8"/>
<rect x="1215.5" y="406.5" width="14" height="12" fill="#f0faf0" stroke="#2a5a2a"/>
<rect x="1216" y="407" width="13" height="2" fill="#58b048"/>
<path d="M1222.5 411.5h-2q-1.5 0-1.5 1.5v2.5q0 1.5 1.5 1.5h2" fill="none" stroke="#1a6a1a" stroke-width="1"/>
<path d="M1224.0 410v8M1227.0 410v8M1222.5 412.5h6M1222.5 415.5h6" stroke="#0a8a0a" stroke-width="1.1"/>
<rect x="1216.5" y="416.5" width="7" height="4" fill="#d8e4f4" stroke="#303a60"/>
<rect x="1218" y="418" width="4" height="1" fill="#6078a8"/>
<path d="M1215.5 428.5l5 4-5 4z" fill="none" stroke="#909090" stroke-width="1"/>
<path d="M1233.5 426.5h5l1 1h8v9h-14z" fill="#dfe6f4" stroke="#6a7890"/>
<rect x="1234" y="428" width="14" height="8" fill="#c8d6f0"/>
<rect x="1236" y="430" width="5" height="1" fill="#304a90"/><rect x="1236" y="432" width="4" height="1" fill="#304a90"/>
<path d="M1241 435l6-6v6z" fill="#3a5ab0"/>
<path d="M1215.5 446.5l5 4-5 4z" fill="none" stroke="#909090" stroke-width="1"/>
<path d="M1233.5 444.5h5l1 1h8v9h-14z" fill="#d8d8d8" stroke="#707070"/>
<rect x="1234" y="447" width="14" height="7" fill="#b0b0b0"/>
<rect x="1238.5" y="448.5" width="7" height="4" fill="#f0f0f0" stroke="#505050"/>
<path d="M1235 450.5h3" stroke="#f0f0f0" stroke-width="1"/>
<path d="M1236.5 460.5h8l3 3v11h-11z" fill="#e8eefa" stroke="#2a3460"/>
<path d="M1244.5 460.5v3h3" fill="#2a3460" stroke="#2a3460"/>
<rect x="1238" y="470" width="8" height="1" fill="#5a70a8"/><rect x="1238" y="472" width="8" height="1" fill="#5a70a8"/>
<rect x="1233" y="461.5" width="10" height="7.5" fill="#fff" opacity=".85"/>
<path d="M1237.5 463.5h-2q-1.5 0-1.5 1.5v2.5q0 1.5 1.5 1.5h2" fill="none" stroke="#1a6a1a" stroke-width="1"/>
<path d="M1239.0 462v8M1242.0 462v8M1237.5 464.5h6M1237.5 467.5h6" stroke="#0a8a0a" stroke-width="1.1"/>
<path d="M1194.5 699.5v6l-3 -3z" fill="#606060"/>
<defs><linearGradient id="hg1203_695" x1="0" y1="0" x2="0" y2="1"><stop offset="0" stop-color="#fafafa"/><stop offset=".5" stop-color="#e4e4e4"/><stop offset="1" stop-color="#cdcdcd"/></linearGradient></defs>
<rect x="1203.5" y="695.5" width="180" height="15" rx="2" fill="url(#hg1203_695)" stroke="#9a9a9a"/>
<rect x="1291.0" y="700.0" width="1" height="6" fill="#606060"/>
<rect x="1293.0" y="700.0" width="1" height="6" fill="#606060"/>
<rect x="1295.0" y="700.0" width="1" height="6" fill="#606060"/>
<path d="M1399.5 699.5v6l3 -3z" fill="#606060"/>
<path d="M1365 745h9l-4.5 4.5z" fill="#fff"/>
<path d="M1383.5 740.5h5M1384.5 740.5v6M1387.5 740.5v6M1382 746.5h8M1386 747v5" fill="none" stroke="#fff" stroke-width="1.1"/>
<path d="M1396 742l9 9M1405 742l-9 9" stroke="#fff" stroke-width="1.3"/>
<rect x="1187.5" y="787.5" width="22" height="21" fill="#fdf0c0" stroke="#f0d890"/>
<rect x="1190.5" y="791.5" width="6" height="6" fill="#fff" stroke="#000"/>
<path d="M1191.5 794.5h4M1193.5 792.5v4" stroke="#000" stroke-width="1"/>
<rect x="1198" y="792" width="8" height="1" fill="#404040"/><rect x="1198" y="794" width="6" height="1" fill="#404040"/><rect x="1198" y="796" width="7" height="1" fill="#404040"/>
<rect x="1190.5" y="800.5" width="6" height="6" fill="#fff" stroke="#000"/>
<path d="M1191.5 803.5h4M1193.5 801.5v4" stroke="#000" stroke-width="1"/>
<rect x="1198" y="801" width="8" height="1" fill="#404040"/><rect x="1198" y="803" width="6" height="1" fill="#404040"/><rect x="1198" y="805" width="7" height="1" fill="#404040"/>
<text x="1212" y="798" font-family="Liberation Serif" font-size="9" fill="#2040a0">A</text>
<text x="1212" y="807" font-family="Liberation Serif" font-size="9" fill="#c03030">Z</text>
<path d="M1225.5 790v15M1222.5 802l3 4 3-4" fill="none" stroke="#000" stroke-width="1.3"/>
<rect x="1236" y="789" width="1" height="18" fill="#8f9bb0"/>
<rect x="1237" y="789" width="1" height="18" fill="#f2f5fa"/>
<rect x="1243.5" y="791.5" width="14" height="13" fill="#e4e6ea" stroke="#a8acb4"/>
<rect x="1246.5" y="795.5" width="8" height="5" fill="none" stroke="#b8bcc4"/>
<rect x="1390" y="760" width="18" height="22" fill="#eef0f4"/>
<path d="M1397 771h5l-2.5 3z" fill="#000"/>
<rect x="41.5" y="974.5" width="11" height="13" fill="#f4f4f0" stroke="#b0b0a8"/>
<rect x="44" y="973" width="6" height="3" fill="#b8a060"/>
<circle cx="52" cy="985" r="4.5" fill="#e05030" stroke="#a02010" stroke-width=".7"/>
<path d="M50 983l4 4M54 983l-4 4" stroke="#fff" stroke-width="1.2"/>
<rect x="117.5" y="975.5" width="12" height="11" fill="#fff" stroke="#40508a"/>
<rect x="119" y="978" width="9" height="1" fill="#6070a0"/>
<rect x="119" y="980" width="9" height="1" fill="#6070a0"/>
<rect x="119" y="982" width="9" height="1" fill="#6070a0"/>
<rect x="119" y="984" width="9" height="1" fill="#6070a0"/>
<rect x="186.5" y="974.5" width="12" height="10" fill="#fff" stroke="#40508a"/>
<rect x="187" y="975" width="11" height="2" fill="#5a7ac8"/>
<rect x="188" y="978" width="8" height="1" fill="#6070a0"/>
<rect x="188" y="980" width="8" height="1" fill="#6070a0"/>
<rect x="188" y="982" width="8" height="1" fill="#6070a0"/>
<circle cx="196" cy="986" r="2.5" fill="#303030"/><circle cx="191" cy="986" r="2" fill="#404040"/>
<path d="M290 979l4-4 4 4-4 4z" fill="#f0d040" stroke="#a08010" stroke-width=".6"/>
<path d="M296 981l3-3 3 3-3 3z" fill="#e070e0"/>
<circle cx="293" cy="986" r="2.5" fill="#303030"/><circle cx="289" cy="987" r="2" fill="#404040"/>
<rect x="1192.5" y="715.5" width="13" height="10" fill="#f0f4fb" stroke="#5a78b8"/><rect x="1193" y="716" width="12" height="2" fill="#6a8ad8"/>
<path d="M1189 719h5l1 1h3v6h-9z" fill="#e8c850"/>
<circle cx="1199" cy="724" r="3" fill="#d8e8f4" stroke="#505860" stroke-width="1.1"/><path d="M1201 726l3 3" stroke="#505860" stroke-width="1.6"/>
<rect x="1264.5" y="715.5" width="14" height="11" fill="#f4f8fb" stroke="#5a78b8"/><rect x="1265" y="716" width="13" height="2" fill="#6a8ad8"/>
<rect x="1271" y="723" width="2" height="6" fill="#e04040"/><rect x="1274" y="721" width="2" height="8" fill="#40a040"/><rect x="1277" y="724" width="2" height="5" fill="#3a70d0"/><rect x="1280" y="722" width="2" height="7" fill="#e0a020"/>
<rect x="1340.5" y="715.5" width="12" height="9" fill="#f4f8fb" stroke="#8090b0"/>
<path d="M1342 720l3-3 3 3-3 3z" fill="#f0d040"/><path d="M1350 722l3-3 3 3-3 3z" fill="#d070e0"/><path d="M1349 727l2-2 2 2-2 2z" fill="#50a0e0"/>
<rect x="1412" y="1014" width="2" height="2" fill="#b8c0d0"/>
<rect x="1409" y="1014" width="2" height="2" fill="#b8c0d0"/>
<rect x="1406" y="1014" width="2" height="2" fill="#b8c0d0"/>
<rect x="1403" y="1014" width="2" height="2" fill="#b8c0d0"/>
<rect x="1412" y="1011" width="2" height="2" fill="#b8c0d0"/>
<rect x="1409" y="1011" width="2" height="2" fill="#b8c0d0"/>
<rect x="1406" y="1011" width="2" height="2" fill="#b8c0d0"/>
<rect x="1412" y="1008" width="2" height="2" fill="#b8c0d0"/>
<rect x="1409" y="1008" width="2" height="2" fill="#b8c0d0"/>
<rect x="1412" y="1005" width="2" height="2" fill="#b8c0d0"/>
</svg>
<!--/ICONS-->
</body></html>
